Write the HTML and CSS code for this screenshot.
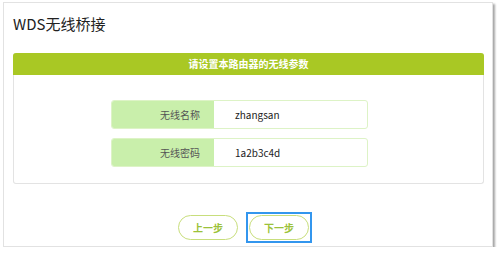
FILE: index.html
```html
<!DOCTYPE html>
<html lang="zh-CN">
<head>
  <meta charset="UTF-8" />
  <title>WDS无线桥接</title>
  <link rel="stylesheet" href="styles.css">
</head>
<body>

<div class="frame">
  <div class="title">WDS无线桥接</div>

  <div class="panel">
    <div class="panel-head">请设置本路由器的无线参数</div>
    <div class="row">
      <div class="label">无线名称</div>
      <div class="value">zhangsan</div>
    </div>
    <div class="row">
      <div class="label">无线密码</div>
      <div class="value">1a2b3c4d</div>
    </div>
  </div>

  <div class="actions">
    <button class="btn">上一步</button>
    <span class="focus-ring"><button class="btn">下一步</button></span>
  </div>
</div>

</body>
</html>
```

FILE: styles.css
```css
body { margin: 0; background: #fff; font-family: "Noto Sans CJK SC", "Noto Sans", sans-serif; }
.frame { margin: 2px 0 0 3px; width: 488px; height: 243px; border: 1px solid #e2e2e2; background: #fff; box-shadow: 2px 2px 2px rgba(0,0,0,0.35); }
.title { margin: 11px 0 0 9px; height: 20px; line-height: 20px; font-size: 15px; color: #222; }
.panel { margin: 19px 0 0 9px; width: 469px; height: 130px; border: 1px solid #e3e3e3; border-top: none; border-radius: 3px; }
.panel-head { height: 22px; line-height: 22px; background: #a9c824; color: #fff; font-size: 10px; font-weight: bold; text-align: center; border-radius: 3px 3px 0 0; margin: 0 -1px; }
.row { display: flex; margin: 25px 0 0 97px; width: 255px; height: 27px; border: 1px solid #ddf3c6; border-radius: 3px; overflow: hidden; }
.row + .row { margin-top: 9px; }
.label { width: 102px; background: #c9efab; color: #555; font-size: 10px; line-height: 27px; text-align: right; padding-right: 14px; box-sizing: border-box; }
.value { padding-left: 21px; font-size: 10px; line-height: 27px; color: #222; }
.actions { display: flex; align-items: center; gap: 8px; margin: 28px 0 0 174px; }
.btn { display: block; width: 60px; height: 25px; border: 1px solid #c8de7c; border-radius: 13px; background: #fff; color: #9cc23a; font-family: inherit; font-size: 10px; font-weight: bold; padding: 0; }
.focus-ring { display: block; padding: 1px; border: 2px solid #3396ee; }
```
